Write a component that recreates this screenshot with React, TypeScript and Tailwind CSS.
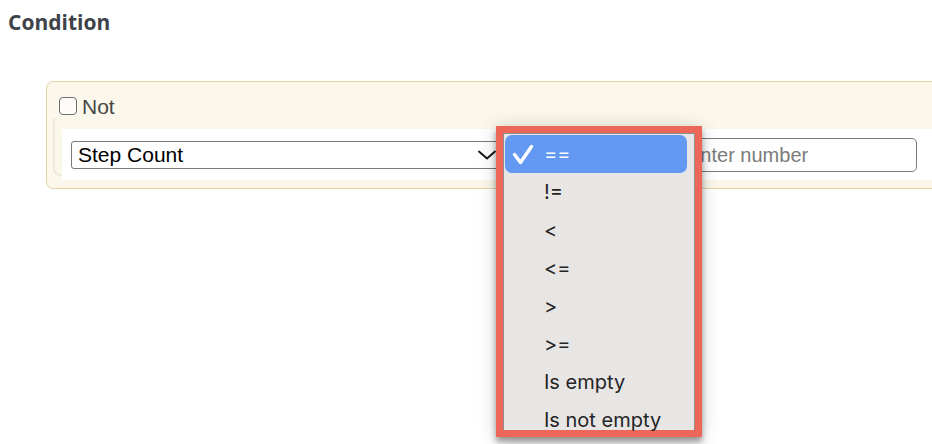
import React from "react";

const operators = ["==", "!=", "<", "<=", ">", ">=", "Is empty", "Is not empty"];

const Check = () => (
  <svg width="20" height="20" viewBox="0 0 20 20" fill="none" className="overflow-visible">
    <path d="M1.5 10.5 L7.5 18.5 L18.5 2.5" stroke="white" strokeWidth="3.4" strokeLinecap="round" strokeLinejoin="round" />
  </svg>
);

const Chevron = () => (
  <svg width="18" height="10" viewBox="0 0 18 10" fill="none">
    <path d="M1 1.5 L9 8.5 L17 1.5" stroke="#111" strokeWidth="1.8" strokeLinecap="round" strokeLinejoin="round" />
  </svg>
);

const OperatorMenu: React.FC<{ selected: string }> = ({ selected }) => (
  <div className="absolute left-[496px] top-[126px] w-[206px] h-[311px] border-[7px] border-[#ec6659] shadow-[0_5px_6px_rgba(0,0,0,0.35),0_2px_18px_rgba(0,0,0,0.18)]">
    <div className="h-full border border-b-0 border-[#8f8f8f] bg-[#e8e6e4] pl-[1px] pr-[7px] pt-[1px] font-['Inter',sans-serif] text-[20px]">
      {operators.map((op) => {
        const active = op === selected;
        return (
          <div
            key={op}
            className={
              active
                ? "flex items-center h-[38px] rounded-[7px] bg-[#6399f3] text-white"
                : "flex items-center h-[38px] text-[#242424]"
            }
          >
            <span className="w-[39px] pl-[8px] flex items-center">{active && <Check />}</span>
            <span className="leading-none">{op}</span>
          </div>
        );
      })}
    </div>
  </div>
);

export default function App() {
  return (
    <div className="relative w-[932px] h-[444px] overflow-hidden bg-white">
      {/* Header */}
      <h2 className="pl-2 pt-[8px] font-['Open_Sans',sans-serif] font-bold text-[21px] leading-[29px] text-[#3e4249]">
        Condition
      </h2>

      {/* Condition group */}
      <div className="mt-[44px] ml-[46px] w-[900px] h-[108px] border border-[#e3d4a6] rounded-[7px] bg-[#fbf7ea] pt-[13px] font-['Liberation_Sans',Arial,sans-serif]">
        <label className="flex items-center h-[22px] pl-3">
          <span className="shrink-0 w-[18px] h-[18px] rounded-[4px] border border-[#6e6e6e] bg-[#fdfcf8]" />
          <span className="ml-[5px] text-[21px] leading-none text-[#474747]">Not</span>
        </label>

        <div className="flex items-start mt-[12px]">
          <div className="ml-[6px] w-[9px] h-[58px] -mt-[11px] border-l-2 border-b-2 border-[#eeeadc] rounded-bl-[7px]" />
          <div className="flex-1 h-[51px] bg-white flex items-center pl-[9px]">
            {/* Field select */}
            <div className="shrink-0 w-[432px] h-[28px] border border-[#7a7a7a] rounded-[3px] flex items-center justify-between pl-[6px] pr-[6px] bg-white">
              <span className="text-[21px] leading-none text-black">Step Count</span>
              <Chevron />
            </div>

            {/* Operator select (covered by open menu) */}
            <div className="shrink-0 ml-[5px] w-[168px] h-[28px] border border-[#7a7a7a] rounded-[3px] flex items-center pl-[6px] text-[20px]">
              ==
            </div>

            {/* Value */}
            <div className="shrink-0 ml-[5px] w-[236px] h-[34px] border border-[#7a7a7a] rounded-[5px] flex items-center pl-[5px]">
              <span className="text-[20px] leading-none text-[#7b7b7b]">Enter number</span>
            </div>
          </div>
        </div>
      </div>

      <OperatorMenu selected="==" />
    </div>
  );
}
